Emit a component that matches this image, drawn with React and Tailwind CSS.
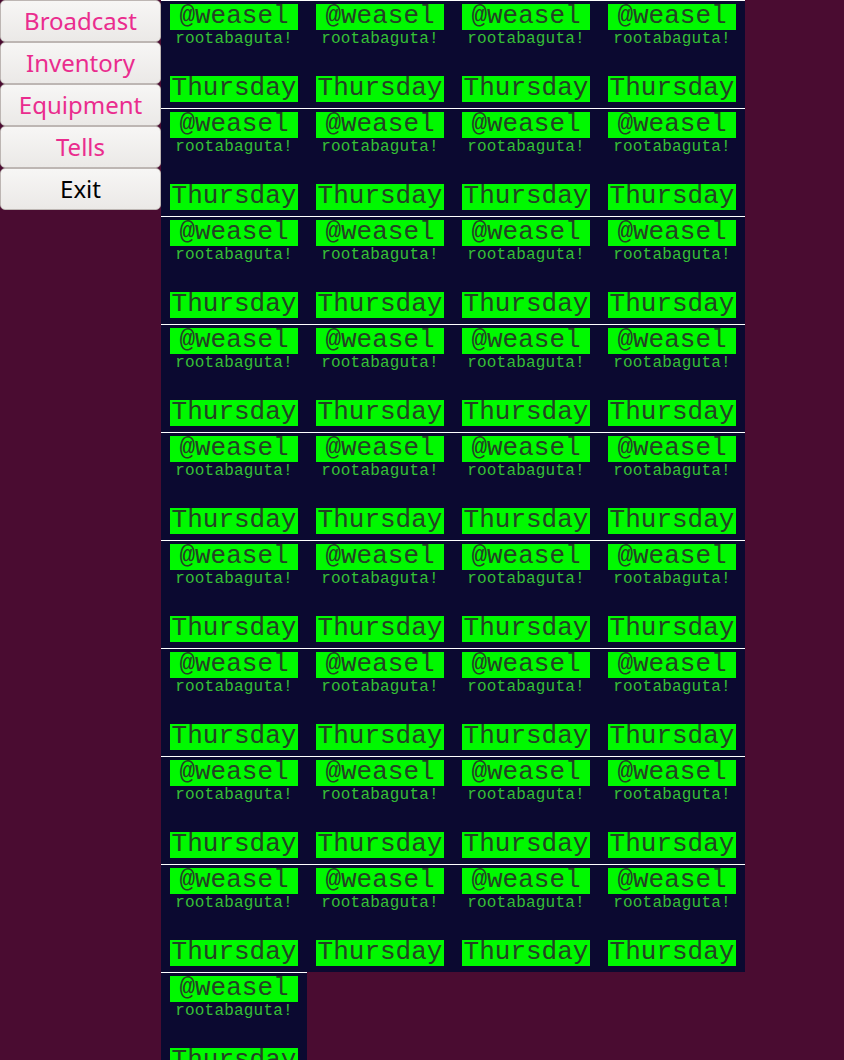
import React from "react";

const buttons = [
  { label: "Broadcast", color: "text-[#ea2c8e]" },
  { label: "Inventory", color: "text-[#ea2c8e]" },
  { label: "Equipment", color: "text-[#ea2c8e]" },
  { label: "Tells", color: "text-[#ea2c8e]" },
  { label: "Exit", color: "text-black" },
];

function Cell() {
  return (
    <div className="w-[146px] h-[108px] bg-[#0b0930] border-t border-white flex flex-col items-center">
      <div className="mt-[3px] w-[128px] h-[26px] bg-[#00f900] flex items-start justify-center pt-[0px] text-[26px] leading-[24px] text-[#244224] [font-family:'Liberation_Mono',monospace]">
        @weasel
      </div>
      <div className="mt-[1px] text-[16px] leading-[16px] text-[#36c036] [font-family:'Liberation_Mono',monospace] tracking-[0.2px]">
        rootabaguta!
      </div>
      <div className="mt-[29px] w-[128px] h-[26px] bg-[#00f900] flex items-start justify-center text-[26px] leading-[24px] text-[#244224] [font-family:'Liberation_Mono',monospace]">
        Thursday
      </div>
    </div>
  );
}

export default function App() {
  const cells = Array.from({ length: 37 });
  return (
    <div className="w-[844px] h-[1060px] overflow-hidden bg-[#4a0c31] flex items-start">
      <div className="w-[161px] flex flex-col">
        {buttons.map((b) => (
          <div
            key={b.label}
            className={`h-[42px] w-[161px] rounded-[5px] border border-[#bdb6b3] bg-gradient-to-b from-[#f7f6f5] to-[#ebe9e7] flex items-center justify-center text-[24px] ${b.color} [font-family:'Noto_Sans',sans-serif]`}
          >
            {b.label}
          </div>
        ))}
      </div>
      <div className="w-[584px] flex flex-wrap content-start">
        {cells.map((_, i) => (
          <Cell key={i} />
        ))}
      </div>
    </div>
  );
}
